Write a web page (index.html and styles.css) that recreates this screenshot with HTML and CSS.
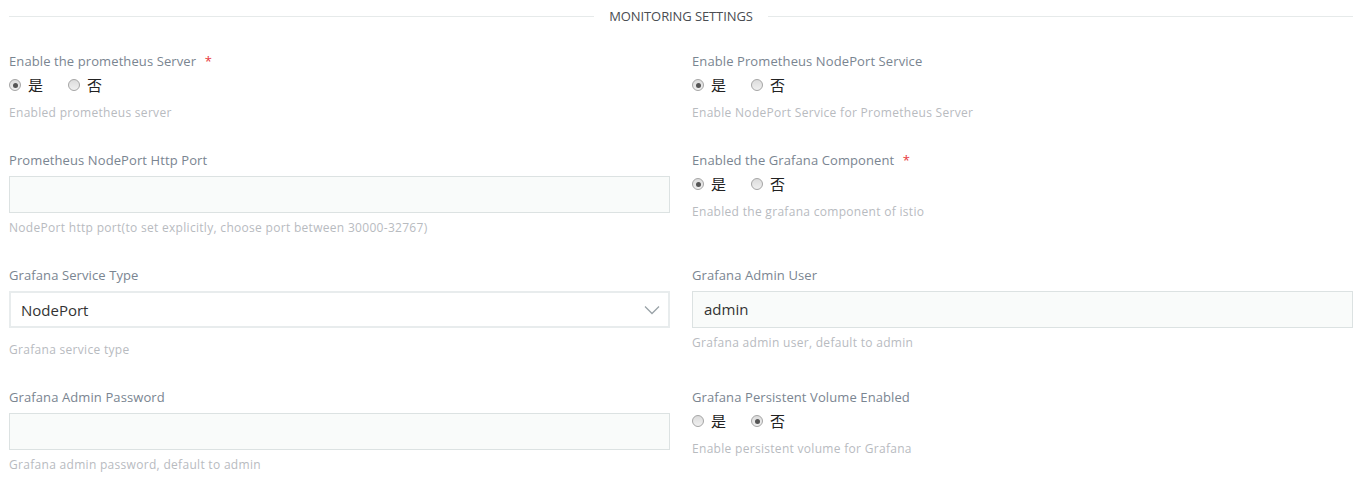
FILE: index.html
```html
<!DOCTYPE html>
<html>
<head>
<meta charset="utf-8">
<link rel="stylesheet" href="styles.css">
</head>
<body>
<div class="page">
  <div class="section-head">
    <span class="rule"></span>
    <span class="section-title">MONITORING SETTINGS</span>
    <span class="rule"></span>
  </div>
  <div class="grid">
    <div class="field">
      <div class="label">Enable the prometheus Server <span class="req">*</span></div>
      <div class="radios">
        <span class="radio"><span class="dot on"></span>是</span>
        <span class="radio"><span class="dot"></span>否</span>
      </div>
      <div class="help">Enabled prometheus server</div>
    </div>
    <div class="field">
      <div class="label">Enable Prometheus NodePort Service</div>
      <div class="radios">
        <span class="radio"><span class="dot on"></span>是</span>
        <span class="radio"><span class="dot"></span>否</span>
      </div>
      <div class="help">Enable NodePort Service for Prometheus Server</div>
    </div>

    <div class="field">
      <div class="label">Prometheus NodePort Http Port</div>
      <div class="input"></div>
      <div class="help">NodePort http port(to set explicitly, choose port between 30000-32767)</div>
    </div>
    <div class="field">
      <div class="label">Enabled the Grafana Component <span class="req">*</span></div>
      <div class="radios">
        <span class="radio"><span class="dot on"></span>是</span>
        <span class="radio"><span class="dot"></span>否</span>
      </div>
      <div class="help">Enabled the grafana component of istio</div>
    </div>

    <div class="field">
      <div class="label">Grafana Service Type</div>
      <div class="select">
        <span>NodePort</span>
        <svg class="chev" width="16" height="10" viewBox="0 0 16 10"><path d="M1 1.5 L8 8.5 L15 1.5" fill="none" stroke="#9aa3a8" stroke-width="1.3"/></svg>
      </div>
      <div class="help">Grafana service type</div>
    </div>
    <div class="field">
      <div class="label">Grafana Admin User</div>
      <div class="input">admin</div>
      <div class="help">Grafana admin user, default to admin</div>
    </div>

    <div class="field">
      <div class="label">Grafana Admin Password</div>
      <div class="input"></div>
      <div class="help">Grafana admin password, default to admin</div>
    </div>
    <div class="field">
      <div class="label">Grafana Persistent Volume Enabled</div>
      <div class="radios">
        <span class="radio"><span class="dot"></span>是</span>
        <span class="radio"><span class="dot on"></span>否</span>
      </div>
      <div class="help">Enable persistent volume for Grafana</div>
    </div>
  </div>
</div>
</body>
</html>
```
FILE: styles.css
```css
html, body {
  margin: 0;
  padding: 0;
  background: #fff;
}
body {
  font-family: "Open Sans", "Noto Sans CJK SC", sans-serif;
}
.page {
  padding: 6px 8px 0 9px;
}
.section-head {
  display: flex;
  align-items: center;
  gap: 15px;
  height: 20px;
}
.rule {
  flex: 1;
  height: 1px;
  background: #e6eaea;
}
.section-title {
  font-size: 13px;
  color: #4a4d52;
  letter-spacing: -0.1px;
}
.grid {
  display: grid;
  grid-template-columns: 1fr 1fr;
  column-gap: 22px;
  row-gap: 28px;
  margin-top: 25px;
}
.field {
  display: flex;
  flex-direction: column;
  align-items: stretch;
}
.label {
  font-size: 13px;
  line-height: 20px;
  color: #7a8591;
  letter-spacing: 0.1px;
}
.req {
  color: #e8383d;
  margin-left: 5px;
}
.radios {
  display: flex;
  gap: 25px;
  height: 20px;
  margin-top: 4px;
  align-items: center;
}
.radio {
  display: flex;
  align-items: center;
  gap: 7px;
  font-family: "Noto Sans CJK SC", sans-serif;
  font-size: 15px;
  color: #222;
  line-height: 20px;
}
.dot {
  width: 10px;
  height: 10px;
  border-radius: 50%;
  border: 1px solid #a5a5a5;
  background: linear-gradient(#dcdcdc, #f0f0f0);
  position: relative;
}
.dot.on::after {
  content: "";
  position: absolute;
  left: 2.5px;
  top: 2.5px;
  width: 5px;
  height: 5px;
  border-radius: 50%;
  background: #555;
}
.help {
  font-size: 12px;
  line-height: 18px;
  color: #b8bbbf;
  letter-spacing: 0.3px;
  margin-top: 9px;
}
.input {
  margin-top: 6px;
  height: 35px;
  border: 1px solid #dce2e2;
  background: #f9fbfa;
  box-sizing: content-box;
  font-size: 15px;
  line-height: 35px;
  padding: 0 11px;
  color: #333;
}
.input + .help {
  margin-top: 6px;
}
.select {
  margin-top: 6px;
  height: 33px;
  border: 2px solid #e8eced;
  background: #fff;
  display: flex;
  align-items: center;
  justify-content: space-between;
  padding: 0 8px 0 10px;
  font-size: 15px;
  color: #333;
}
.select + .help {
  margin-top: 13px;
}
.chev {
  display: block;
}
```
